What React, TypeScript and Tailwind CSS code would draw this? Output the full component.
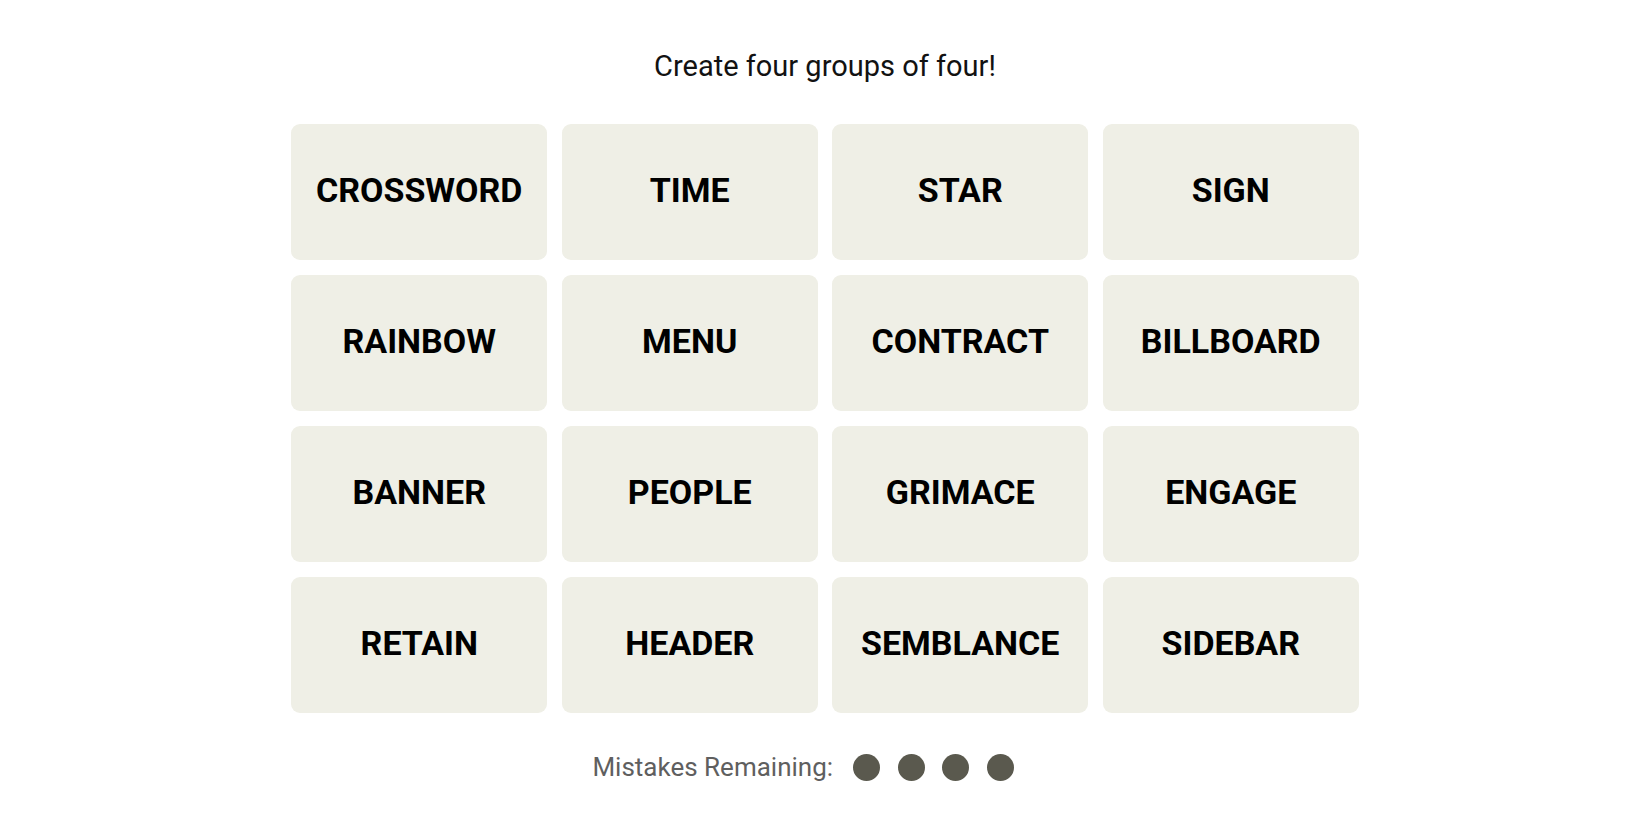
const words: string[] = [
    "CROSSWORD", "TIME", "STAR", "SIGN",
    "RAINBOW", "MENU", "CONTRACT", "BILLBOARD",
    "BANNER", "PEOPLE", "GRIMACE", "ENGAGE",
    "RETAIN", "HEADER", "SEMBLANCE", "SIDEBAR",
];

const mistakesLeft = 4;

const Tile: React.FC<{ word: string }> = ({ word }) => {
    return (
        <div className="h-[136px] w-[256px] pb-[5px] rounded-[9px] bg-[#efefe6] flex items-center justify-center">
            <span className="text-[34px] leading-none font-bold text-black">{word}</span>
        </div>
    )
}

const App: React.FC = () => {
    return (
        <div className="min-h-screen w-full bg-white font-['Roboto',sans-serif] flex flex-col items-center">
            <h2 className="pt-[50px] text-[29px] leading-[32px] font-normal text-[#121212]">Create four groups of four!</h2>

            <div className="mt-[42px] grid grid-cols-[repeat(4,256px)] gap-x-[14.5px] gap-y-[15px]">
                {words.map((w) => <Tile key={w} word={w} />)}
            </div>

            <div className="mt-[38px] h-[32px] flex items-center pr-[44px]">
                <span className="text-[26px] leading-none text-[#5f5f5f]">Mistakes Remaining:</span>
                <div className="ml-[20px] flex gap-[17.5px]">
                    {Array.from({ length: mistakesLeft }).map((_, i) => (
                        <span key={i} className="block h-[27px] w-[27px] rounded-full bg-[#5a594e]"></span>
                    ))}
                </div>
            </div>
        </div>
    )
}

export default App;
